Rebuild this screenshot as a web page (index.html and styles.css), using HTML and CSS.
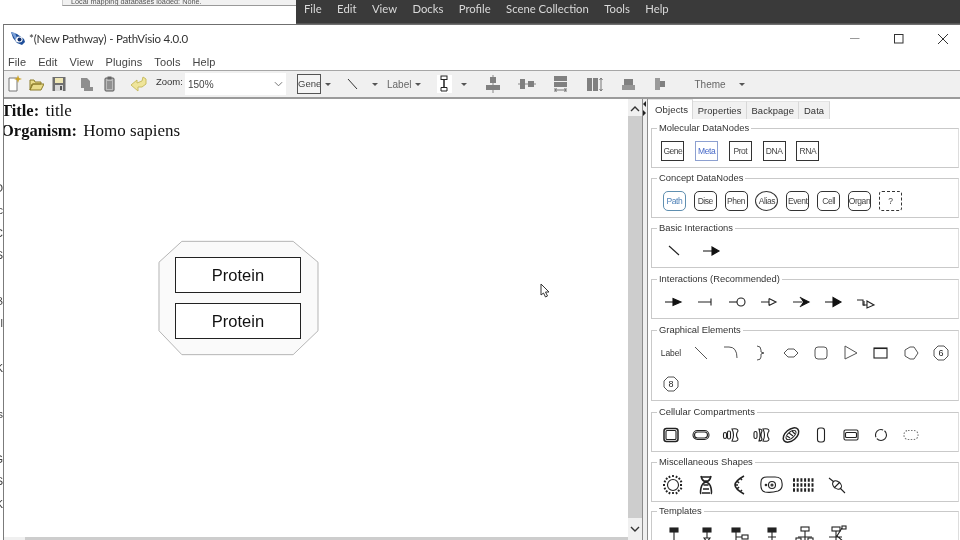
FILE: index.html
```html
<!DOCTYPE html>
<html lang="en">
<head>
<meta charset="utf-8">
<title>PathVisio</title>
<link rel="stylesheet" href="styles.css">
</head>
<body>
<div class="screen">
  <header class="desk-top">
    <div class="back-window"><div class="back-notice">Local mapping databases loaded: None.</div></div>
    <nav class="obs-menu"><span>File</span><span>Edit</span><span>View</span><span>Docks</span><span>Profile</span><span>Scene Collection</span><span>Tools</span><span>Help</span></nav>
  </header>
  <div class="desk-main">
    <div class="behind-strip"><i></i><i>O</i><i>c</i><i>C</i><i>S</i><i></i><i>B</i><i>l</i><i></i><i>K</i><i></i><i>s</i><i></i><i>G</i><i>S</i><i>K</i></div>
    <section class="window">
      <div class="titlebar">
        <svg class="app-logo" viewBox="0 0 16 15"><path d="M1 1 7 3 14 8 15 11 12 14 7 12 3 7Z" fill="#1f4f9a"/><ellipse cx="9" cy="8.5" rx="3.6" ry="3" fill="#fff"/><circle cx="9.5" cy="8.5" r="2" fill="#12306b"/><path d="M1 1 5 2 7 7 5 8Z" fill="#7aa0d8"/></svg>
        <span class="win-title">*(New Pathway) - PathVisio 4.0.0</span>
        <div class="win-controls">
          <svg viewBox="0 0 12 12"><path d="M1 5.5H10.5" stroke="#999" fill="none"/></svg>
          <svg viewBox="0 0 12 12"><rect x="1.5" y="1.5" width="8.5" height="8.5" stroke="#333" fill="none"/></svg>
          <svg viewBox="0 0 12 12"><path d="M1 1 11 11M11 1 1 11" stroke="#333" fill="none"/></svg>
        </div>
      </div>
      <nav class="app-menu"><span>File</span><span>Edit</span><span>View</span><span>Plugins</span><span>Tools</span><span>Help</span></nav>
      <div class="toolbar">
        <svg class="ti w14" viewBox="0 0 14 18"><path d="M1 3H9V16H1Z" fill="#fff" stroke="#777"/><path d="M10 0 11 3 14 4 11 5 10 8 9 5 6 4 9 3Z" fill="#c9a227"/></svg>
        <svg class="ti w15 m7" viewBox="0 0 15 18"><path d="M1 15V5H5L6 7H12V9H4L1 15L3 9H15L12 15Z" fill="#e9dc8a" stroke="#8c7d2a"/></svg>
        <svg class="ti w14 m8" viewBox="0 0 14 18"><rect x=".5" y="2" width="13" height="14" fill="#6f6f6f"/><rect x="3" y="3" width="8" height="5" fill="#efe7b5"/><rect x="3" y="10" width="8" height="6" fill="#d8d8d8"/><rect x="8" y="11" width="2" height="4" fill="#555"/></svg>
        <svg class="ti w12 m15" viewBox="0 0 12 18"><path d="M0 3H6L9 6V12H12V16H3V13H0Z" fill="#8e8e8e"/></svg>
        <svg class="ti w12 m11" viewBox="0 0 12 18"><rect x="1" y="3" width="9" height="13" rx="1" fill="#bbb" stroke="#555"/><rect x="3.5" y="1.5" width="4" height="3" fill="#666"/><path d="M3 7H8M3 9H8M3 11H8M3 13H8" stroke="#666"/></svg>
        <svg class="ti w16 m15" viewBox="0 0 16 18"><path d="M0 10 6 5V8L11 6 12 2 15 4V9L11 12 7 12V16Z" fill="#efe59a" stroke="#c9bd62"/></svg>
        <span class="zoom-label">Zoom:</span>
        <div class="zoom-combo"><span>150%</span><svg viewBox="0 0 10 6"><path d="M1 1 5 5 9 1" stroke="#666" fill="none"/></svg></div>
        <span class="gene-btn">Gene</span>
        <span class="caret m4"></span>
        <svg class="ti w11 m16" viewBox="0 0 11 18"><path d="M1 4 10 14" stroke="#333" fill="none"/></svg>
        <span class="caret m14"></span>
        <span class="tb-text m9">Label</span>
        <span class="caret m4"></span>
        <svg class="ti w15 m16 white" viewBox="0 0 15 18"><rect x="4" y="1" width="6" height="3.5" fill="#fff" stroke="#222"/><path d="M7 4.5V12" stroke="#222" stroke-width="1.5"/><path d="M4 12.5H10M4 12.5V16M10 12.5V16M4 16H10" stroke="#222" fill="none"/></svg>
        <span class="caret m9"></span>
        <svg class="ti w14 m19" viewBox="0 0 14 18"><path d="M7 0V18" stroke="#888"/><rect x="4" y="2" width="6" height="6" fill="#808080"/><rect x="0" y="10" width="14" height="5" fill="#808080"/></svg>
        <svg class="ti w18 m18" viewBox="0 0 18 18"><path d="M0 9H18" stroke="#888"/><rect x="2" y="4" width="5" height="10" fill="#808080"/><rect x="10" y="6" width="6" height="6" fill="#808080"/></svg>
        <svg class="ti w14 m18" viewBox="0 0 14 18"><rect x="0" y="1" width="13" height="5" fill="#808080"/><rect x="0" y="7" width="13" height="5" fill="#808080"/><path d="M1 15H12M1 15 3 13.5M1 15 3 16.5M12 15 10 13.5M12 15 10 16.5M1 13V17M12 13V17" stroke="#777" fill="none"/></svg>
        <svg class="ti w18 m19" viewBox="0 0 18 18"><rect x="0" y="3" width="5" height="13" fill="#808080"/><rect x="6" y="3" width="5" height="13" fill="#808080"/><path d="M14 3V16M14 3 12.5 5M14 3 15.5 5M14 16 12.5 14M14 16 15.5 14" stroke="#777" fill="none"/></svg>
        <svg class="ti w13 m17" viewBox="0 0 13 18"><rect x="2" y="4" width="9" height="6" fill="#808080"/><rect x="0" y="10" width="13" height="5" fill="#969696"/></svg>
        <svg class="ti w11 m20" viewBox="0 0 11 18"><rect x="0" y="3" width="5" height="12" fill="#9a9a9a"/><rect x="5" y="6" width="5" height="6" fill="#808080"/></svg>
        <span class="tb-text m28">Theme</span>
        <span class="caret m13"></span>
      </div>
      <div class="workspace">
        <div class="canvas-col">
          <main class="canvas">
            <div class="meta-line"><b>Title:</b> title</div>
            <div class="meta-line"><b>Organism:</b> Homo sapiens</div>
            <svg class="group-shape" viewBox="0 0 162 116"><path d="M1 22 24 1H136L161 22V91L136 115H24L1 91Z" fill="#fafafa" stroke="#b4b4b4"/></svg>
            <div class="node-protein first">Protein</div>
            <div class="node-protein second">Protein</div>
            <svg class="cursor" viewBox="0 0 10 15"><path d="M1 1V12L3.5 10 5.5 14 7.5 13 5.5 9H9Z" fill="#fff" stroke="#333"/></svg>
          </main>
          <div class="hscroll"><div class="hthumb"></div></div>
        </div>
        <div class="vscroll">
          <svg viewBox="0 0 10 6"><path d="M1 5 5 1 9 5" stroke="#333" stroke-width="1.4" fill="none"/></svg>
          <div class="vthumb"></div>
          <svg viewBox="0 0 10 6"><path d="M1 1 5 5 9 1" stroke="#333" stroke-width="1.4" fill="none"/></svg>
        </div>
        <div class="splitter"><span class="tri-l"></span><span class="tri-r"></span></div>
        <aside class="panel">
          <div class="tabs"><span class="tab active">Objects</span><span class="tab">Properties</span><span class="tab">Backpage</span><span class="tab">Data</span></div>
          <div class="palette">
            <fieldset class="group s-mol"><legend>Molecular DataNodes</legend><div class="cells">
              <div class="cell"><span class="dn">Gene</span></div>
              <div class="cell"><span class="dn blue">Meta</span></div>
              <div class="cell"><span class="dn">Prot</span></div>
              <div class="cell"><span class="dn">DNA</span></div>
              <div class="cell"><span class="dn">RNA</span></div>
            </div></fieldset>
            <fieldset class="group s-con"><legend>Concept DataNodes</legend><div class="cells">
              <div class="cell"><span class="dn round path">Path</span></div>
              <div class="cell"><span class="dn round">Dise</span></div>
              <div class="cell"><span class="dn round">Phen</span></div>
              <div class="cell"><span class="dn oval">Alias</span></div>
              <div class="cell"><span class="dn round">Event</span></div>
              <div class="cell"><span class="dn round">Cell</span></div>
              <div class="cell"><span class="dn round">Organ</span></div>
              <div class="cell"><span class="dn dash">?</span></div>
            </div></fieldset>
            <fieldset class="group s-bas"><legend>Basic Interactions</legend><div class="cells">
              <div class="cell"><svg class="ic" viewBox="0 0 24 24"><path d="M7 7 17 16"/></svg></div>
              <div class="cell"><svg class="ic" viewBox="0 0 24 24"><path d="M4 12H14"/><path class="f" d="M13 8 20 12 13 16Z"/></svg></div>
            </div></fieldset>
            <fieldset class="group s-int"><legend>Interactions (Recommended)</legend><div class="cells">
              <div class="cell"><svg class="ic" viewBox="0 0 24 24"><path d="M4 12H13"/><path class="f" d="M12 8.5 20 12 12 15.5Z"/></svg></div>
              <div class="cell"><svg class="ic" viewBox="0 0 24 24"><path d="M5 12H18M18 8.5V15.5"/></svg></div>
              <div class="cell"><svg class="ic" viewBox="0 0 24 24"><path d="M4 12H12"/><circle cx="16" cy="12" r="4"/></svg></div>
              <div class="cell"><svg class="ic" viewBox="0 0 24 24"><path d="M4 12H12M12 8.5V15.5M12 8.5 19 12 12 15.5"/></svg></div>
              <div class="cell"><svg class="ic" viewBox="0 0 24 24"><path d="M4 12H13M11 7 15 12 11 17"/><path class="f" d="M13 8.5 20 12 13 15.5 14.5 12Z"/></svg></div>
              <div class="cell"><svg class="ic" viewBox="0 0 24 24"><path d="M4 12H13"/><path class="f" d="M12 7.5 20 12 12 16.5Z"/></svg></div>
              <div class="cell"><svg class="ic" viewBox="0 0 24 24"><path d="M4 10H10V15H14M14 11 21 15 14 18Z"/><path d="M11 11V16"/></svg></div>
            </div></fieldset>
            <fieldset class="group s-gfx"><legend>Graphical Elements</legend><div class="cells">
              <div class="cell"><span class="plain">Label</span></div>
              <div class="cell"><svg class="ic soft" viewBox="0 0 24 24"><path d="M6 6 18 18"/></svg></div>
              <div class="cell"><svg class="ic soft" viewBox="0 0 24 24"><path d="M5 6H10Q18 6 18 17"/></svg></div>
              <div class="cell"><svg class="ic soft" viewBox="0 0 24 24"><path d="M8 5Q12 5 12 9V11L15 12 12 13V16Q12 19 8 19"/></svg></div>
              <div class="cell"><svg class="ic soft" viewBox="0 0 24 24"><path d="M5 12 9 8H15L19 12 15 16H9Z"/></svg></div>
              <div class="cell"><svg class="ic soft" viewBox="0 0 24 24"><rect x="6" y="6" width="12" height="12" rx="3"/></svg></div>
              <div class="cell"><svg class="ic soft" viewBox="0 0 24 24"><path d="M6 5V18L18 12Z"/></svg></div>
              <div class="cell"><svg class="ic" viewBox="0 0 24 24"><rect x="5" y="7" width="13" height="10"/><path d="M5 7.500H18" stroke-width="2"/></svg></div>
              <div class="cell"><svg class="ic soft" viewBox="0 0 24 24"><path d="M6 9 11 6H15L19 12 15 18H11L6 15Z"/></svg></div>
              <div class="cell"><svg class="ic soft" viewBox="0 0 24 24"><path d="M9 5H15L19 9V15L15 19H9L5 15V9Z"/><text x="12" y="15" text-anchor="middle" class="num">6</text></svg></div>
              <div class="cell"><svg class="ic soft" viewBox="0 0 24 24"><path d="M9 5H15L19 9V15L15 19H9L5 15V9Z"/><text x="12" y="15" text-anchor="middle" class="num">8</text></svg></div>
            </div></fieldset>
            <fieldset class="group s-cel"><legend>Cellular Compartments</legend><div class="cells">
              <div class="cell"><svg class="ic" viewBox="0 0 24 24"><rect x="5" y="5.500" width="14" height="13" rx="2.500" class="bold"/><rect x="7" y="7.500" width="10" height="9" rx="1"/></svg></div>
              <div class="cell"><svg class="ic" viewBox="0 0 24 24"><rect x="4" y="7.500" width="16" height="9" rx="4.500"/><rect x="5.500" y="9" width="13" height="6" rx="3"/></svg></div>
              <div class="cell"><svg class="ic" viewBox="0 0 24 24"><path d="M13 6Q19 5 19 8 16 12 19 16 19 19 13 18 16 12 13 6Z"/><rect x="8.500" y="8" width="3" height="8" rx="1.500"/><rect x="4.500" y="9.500" width="3" height="6" rx="1.500"/></svg></div>
              <div class="cell"><svg class="ic" viewBox="0 0 24 24"><path d="M14 6Q20 5 20 8 17 12 20 16 20 19 14 18 17 12 14 6Z"/><path d="M10 6Q13 6 13 8 11 12 13 16 13 18 10 18 12 12 10 6Z"/><rect x="5" y="8.500" width="3" height="7" rx="1.500"/></svg></div>
              <div class="cell"><svg class="ic" viewBox="0 0 24 24"><ellipse cx="12" cy="12" rx="9" ry="5.500" transform="rotate(-40 12 12)" class="bold"/><ellipse cx="12" cy="12" rx="6" ry="3" transform="rotate(-40 12 12)"/><path d="M8 13 11 15M10 10 14 13M13 8 16 11"/></svg></div>
              <div class="cell"><svg class="ic" viewBox="0 0 24 24"><rect x="8.500" y="5" width="7" height="14" rx="2.500"/></svg></div>
              <div class="cell"><svg class="ic" viewBox="0 0 24 24"><rect x="5" y="7" width="14" height="10" rx="1.500"/><rect x="6.500" y="9.500" width="11" height="5" rx="1"/></svg></div>
              <div class="cell"><svg class="ic" viewBox="0 0 24 24"><circle cx="12" cy="12" r="5.500" stroke-dasharray="13 1.500"/></svg></div>
              <div class="cell"><svg class="ic faint" viewBox="0 0 24 24"><rect x="5" y="7.500" width="14" height="9" rx="4" stroke-dasharray="1.500 1.500"/></svg></div>
            </div></fieldset>
            <fieldset class="group s-mis"><legend>Miscellaneous Shapes</legend><div class="cells">
              <div class="cell"><svg class="ic" viewBox="0 0 24 24"><circle cx="12" cy="12" r="5.500"/><path class="dots" d="M12 2V5M12 19V22M2 12H5M19 12H22M5 5 7 7M17 17 19 19M19 5 17 7M5 19 7 17M8 3 9 5M16 3 15 5M8 21 9 19M16 21 15 19M3 8 5 9M3 16 5 15M21 8 19 9M21 16 19 15"/></svg></div>
              <div class="cell"><svg class="ic" viewBox="0 0 24 24"><path class="thick" d="M7 3Q8 8 12 9T17 15 17 21M17 3Q16 8 12 9T7 15 7 21M8 4H16M8 20H16M9 8H15M9 16H15M9.500 12H14.500"/></svg></div>
              <div class="cell"><svg class="ic" viewBox="0 0 24 24"><path class="thick" d="M17 3Q8 8 8 12T17 21M13 5 15 7M10 8 12 10M8 12H11M10 16 12 14M13 19 15 17"/></svg></div>
              <div class="cell"><svg class="ic" viewBox="0 0 24 24"><path d="M2 9Q2 4 8 4H16Q23 4 23 10 24 16 19 18 12 20 6 19 1 18 2 9Z"/><circle cx="13" cy="12" r="3.500"/><circle cx="7" cy="12" r=".8"/><circle cx="13" cy="12" r="1"/></svg></div>
              <div class="cell"><svg class="ic" viewBox="0 0 24 24"><path class="grid" d="M1 7H23M1 12H23M1 17H23"/></svg></div>
              <div class="cell"><svg class="ic" viewBox="0 0 24 24"><ellipse cx="12" cy="12" rx="5" ry="3.500" transform="rotate(40 12 12)"/><path d="M4 5 9 9M15 15 20 20"/><path d="M9 15 15 9"/></svg></div>
            </div></fieldset>
            <fieldset class="group s-tem"><legend>Templates</legend><div class="cells">
              <div class="cell"><svg class="ic" viewBox="0 0 24 24"><rect x="8" y="6" width="8" height="4" class="solid"/><path d="M12 10V19M8 19H16"/></svg></div>
              <div class="cell"><svg class="ic" viewBox="0 0 24 24"><rect x="8" y="6" width="8" height="4" class="solid"/><path d="M12 10V16M9 16 12 20 15 16Z"/></svg></div>
              <div class="cell"><svg class="ic" viewBox="0 0 24 24"><rect x="4" y="6" width="8" height="4" class="solid"/><path d="M8 10V20M8 15H14"/><rect x="14" y="13" width="6" height="4"/></svg></div>
              <div class="cell"><svg class="ic" viewBox="0 0 24 24"><rect x="8" y="6" width="8" height="4" class="solid"/><path d="M12 10V19M8 20H16M8 15H16"/></svg></div>
              <div class="cell"><svg class="ic" viewBox="0 0 24 24"><rect x="8" y="5" width="8" height="4"/><path d="M12 9V20M5 15H19"/><rect x="3" y="16" width="5" height="3"/><rect x="15" y="16" width="5" height="3"/></svg></div>
              <div class="cell"><svg class="ic" viewBox="0 0 24 24"><rect x="6" y="5" width="8" height="4"/><path d="M10 9V20M3 15H16M16 6 11 14 18 20"/><rect x="16" y="4" width="4" height="3"/></svg></div>
            </div></fieldset>
          </div>
        </aside>
      </div>
    </section>
  </div>
</div>
</body>
</html>
```
FILE: styles.css
```css
* { box-sizing: border-box; }
html, body { margin: 0; padding: 0; background: #fff; }
.screen {
  width: 960px; height: 540px; overflow: hidden; background: #fff;
  display: flex; flex-direction: column;
  font-family: "Liberation Sans", Arial, sans-serif;
  filter: blur(.35px);
}

/* things behind the window */
.desk-top { height: 24px; display: flex; flex: none; }
.back-window { width: 296px; background: #fff; padding-left: 62px; }
.back-notice {
  height: 6px; overflow: hidden; background: #f1f1f1;
  border-left: 1px solid #ccc; border-bottom: 1px solid #999;
  font-size: 7.300px; line-height: 3px; padding-left: 8px; color: #555; white-space: nowrap;
}
.obs-menu {
  flex: 1; background: #3a3a3a; border-bottom: 1px solid #555;
  display: flex; gap: 15.400px; padding: 0 0 6px 8px; align-items: center;
  color: #d9d9d9; font: 11.300px/1 Lato, sans-serif;
}
.desk-main { flex: 1; display: flex; min-height: 0; }
.behind-strip {
  width: 3px; flex: none; overflow: hidden; padding-top: 130px;
  font-size: 11px; color: #444;
}
.behind-strip i { display: block; height: 22.600px; line-height: 22px; font-style: normal; direction: rtl; white-space: nowrap; }

/* window */
.window {
  flex: 1; min-width: 0; display: flex; flex-direction: column;
  border-left: 1px solid #7b7b7b; border-top: 1px solid #6f6f6f; background: #fff;
}
.titlebar { height: 25px; flex: none; display: flex; align-items: center; padding: 2px 0 0 6px; }
.app-logo { width: 16px; height: 15px; flex: none; }
.win-title { margin-left: 3px; font: 11.500px/1 Lato, sans-serif; letter-spacing: -.22px; color: #333; white-space: nowrap; }
.win-controls { margin-left: auto; display: flex; gap: 32px; padding-right: 11px; }
.win-controls svg { width: 12px; height: 12px; display: block; }
.app-menu {
  height: 21px; flex: none; display: flex; gap: 12px; padding: 5px 0 0 4px;
  font-size: 11px; letter-spacing: .1px; color: #444; line-height: 14px;
  border-bottom: 1px solid #a6a6a6;
}
.toolbar {
  height: 28px; flex: none; display: flex; align-items: center; padding-left: 4px;
  background: #f0f0f0; border-bottom: 2px solid #9b9b9b;
  font-size: 10px; color: #555;
}
.ti { height: 18px; flex: none; display: block; }
.w11 { width: 11px; } .w12 { width: 12px; } .w13 { width: 13px; } .w14 { width: 14px; }
.w15 { width: 15px; } .w16 { width: 16px; } .w18 { width: 18px; }
.m4 { margin-left: 4px; } .m7 { margin-left: 7px; } .m8 { margin-left: 8px; } .m9 { margin-left: 9px; }
.m11 { margin-left: 11px; } .m13 { margin-left: 13px; } .m14 { margin-left: 14px; } .m15 { margin-left: 15px; }
.m16 { margin-left: 16px; } .m17 { margin-left: 17px; } .m18 { margin-left: 18px; } .m19 { margin-left: 19px; }
.m20 { margin-left: 20px; } .m28 { margin-left: 28px; }
.white { background: #fff; }
.zoom-label { margin: 0 0 6px 9px; width: 29px; color: #333; font-size: 9.500px; white-space: nowrap; }
.zoom-combo {
  width: 101px; height: 22px; background: #fff; display: flex; align-items: center;
  justify-content: space-between; padding: 0 3px; color: #444; font-size: 10px;
}
.zoom-combo svg { width: 9px; height: 6px; }
.gene-btn {
  margin-left: 11px; width: 24px; height: 20px; border: 1px solid #555; background: #f5f5f5;
  font-size: 9.500px; line-height: 18px; text-align: center; overflow: hidden; color: #444;
}
.caret { width: 0; height: 0; flex: none; border: 3.500px solid transparent; border-top: 3.500px solid #555; border-bottom: 0; }
.tb-text { font-size: 10px; color: #666; }

/* workspace */
.workspace { flex: 1; min-height: 0; display: flex; }
.canvas-col { width: 624px; flex: none; display: flex; flex-direction: column; }
.canvas { flex: 1; min-height: 0; position: relative; overflow: hidden; background: #fff; padding-top: 2px; }
.meta-line { margin-left: -3px; font: 17px/20px "Liberation Serif", "Times New Roman", serif; color: #111; white-space: nowrap; }
.meta-line b { font-size: 16.500px; margin-right: 2px; }
.group-shape { position: absolute; left: 154px; top: 141px; width: 161px; height: 116px; }
.node-protein {
  position: absolute; left: 171px; width: 126px; height: 36px;
  border: 1.500px solid #222; background: #fff;
  font-size: 16.500px; line-height: 34px; text-align: center; color: #111;
}
.node-protein.first { top: 158px; }
.node-protein.second { top: 204px; }
.cursor { position: absolute; left: 536px; top: 184px; width: 10px; height: 15px; }
.hscroll { height: 3px; flex: none; background: #f0f0f0; padding-left: 21px; }
.hthumb { height: 3px; background: #cdcdcd; }
.vscroll { width: 14px; flex: none; background: #f0f0f0; display: flex; flex-direction: column; align-items: center; padding: 7px 0 8px; }
.vscroll svg { width: 10px; height: 6px; flex: none; }
.vthumb { width: 14px; flex: 1; background: #cdcdcd; margin: 4px 0 8px; }
.splitter {
  width: 6px; flex: none; background: #f0f0f0; border-left: 1px solid #8c8c8c; border-right: 1px solid #8c8c8c;
  display: flex; flex-direction: column; gap: 3px; padding-top: 2px;
}
.tri-l { width: 0; height: 0; border: 3px solid transparent; border-left: 0; border-right: 3px solid #222; }
.tri-r { width: 0; height: 0; border: 3px solid transparent; border-right: 0; border-left: 3px solid #222; }

/* right panel */
.panel { flex: 1; min-width: 0; background: #fff; overflow: hidden; }
.tabs { height: 20px; display: flex; align-items: flex-end; }
.tab {
  height: 18px; padding: 0 4.500px; font-size: 9.400px; line-height: 18px; color: #333;
  background: #f1f1f1; border-right: 1px solid #d8d8d8; border-top: 1px solid #e4e4e4;
  letter-spacing: .1px;
}
.tab.active { height: 20px; line-height: 19px; font-size: 9.600px; background: #fff; padding: 0 4px 0 7px; }
.palette { padding: 3px 0 0 3px; }
.group {
  margin: 0 0 4px; padding: 1px 0 1px 4px; min-width: 0; width: 308px;
  border: 1px solid #c9c9c9; border-right-color: #ddd;
}
.group legend {
  margin-left: 1px; padding: 0 2px; height: 12px;
  font-size: 9.400px; line-height: 12px; color: #333;
}
.cells { display: flex; flex-wrap: wrap; }
.cell { height: 31px; width: 30px; display: flex; align-items: center; justify-content: center; flex: none; }
.s-mol .cell { width: 33.750px; }
.s-con .cell { width: 30.850px; }
.s-con .cells { padding-left: 3px; }
.s-bas { margin-bottom: 5px; }
.s-bas .cell { width: 37px; }
.s-bas .cells { margin-left: -1px; }
.s-int { margin-bottom: 5px; }
.s-int .cell { width: 32px; }
.s-int .cells { padding-left: 1px; }
.s-gfx { margin-bottom: 5px; }
.s-mis { margin-bottom: 3px; }
.s-mis .cell { width: 32.700px; }
.s-mis .cells { padding-left: 1px; }
.s-tem .cell { width: 32.700px; }
.s-tem .cells { padding-left: 2px; }

.dn {
  width: 23px; height: 20px; border: 1px solid #333; background: #fff;
  font-size: 8.500px; line-height: 18px; letter-spacing: -.45px; text-align: center; color: #444;
  white-space: nowrap; display: flex; justify-content: center;
}
.dn.blue { border-color: #8da0d0; color: #4668c8; }
.dn.round { border-radius: 5px; }
.dn.path { border-color: #5f8fb0; color: #4f82b8; }
.dn.oval { border-radius: 50%; }
.dn.dash { border-style: dashed; border-radius: 3px; }
.plain { font-size: 8.500px; color: #333; letter-spacing: -.1px; }
.ic { width: 24px; height: 24px; display: block; }
.ic * { fill: none; stroke: #222; stroke-width: 1.100px; }
.ic .f { fill: #111; stroke: #111; }
.ic .solid { fill: #222; }
.ic .bold { stroke-width: 1.500px; }
.ic .thick { stroke-width: 1.600px; }
.ic .grid { stroke-width: 3.500px; stroke-dasharray: 2 1.700; }
.ic .dots { stroke-width: 1.800px; stroke-dasharray: 2 1; }
.ic .num { fill: #222; stroke: none; font-size: 9px; }
.ic.soft * { stroke: #555; stroke-width: 1px; }
.ic.soft .num { fill: #222; stroke: none; }
.ic.faint * { stroke: #777; }
```
